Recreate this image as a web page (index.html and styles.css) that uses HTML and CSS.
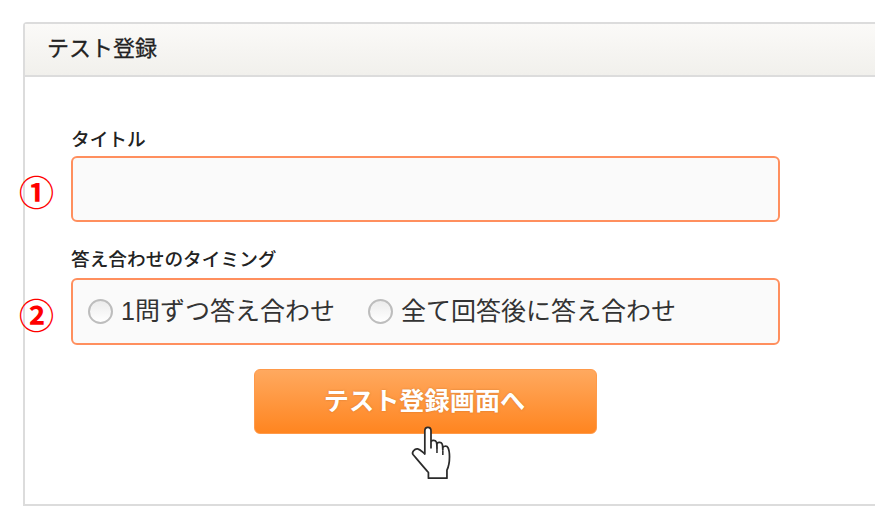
FILE: index.html
```html
<!DOCTYPE html>
<html lang="ja">
<head>
    <meta charset="UTF-8">
    <meta name="viewport" content="width=device-width, initial-scale=1.0">
    <title>テスト登録</title>
    <link rel="stylesheet" href="styles.css">
</head>
<body>
    <div class="panel">
        <div class="panel-header">テスト登録</div>
        <form class="panel-body" action="">
            <div class="field">
                <label class="field-label" for="title">タイトル</label>
                <div class="field-row">
                    <span class="step">①</span>
                    <input type="text" id="title" class="title-input">
                </div>
            </div>
            <div class="field timing">
                <div class="field-label">答え合わせのタイミング</div>
                <div class="field-row radio-box">
                    <span class="step">②</span>
                    <label class="radio"><span class="radio-mark"></span><span class="radio-text">1問ずつ答え合わせ</span></label>
                    <label class="radio"><span class="radio-mark"></span><span class="radio-text">全て回答後に答え合わせ</span></label>
                </div>
            </div>
            <div class="btn-wrap">
                <button type="button" class="btn">テスト登録画面へ
                    <svg class="hand" viewBox="0 0 70 65" width="72" height="67">
                        <path d="M29 33V10.5C29 8 30.5 7 32 7s3 1 3 3.500V27V21.500c0-2 4-2.500 5-.5 .6 1 .8 3 .8 6v-3.500c0-2 4-2.500 5-.3 .5 1 .7 3 .7 6v-2c0-2 4-2.500 5-.5 1 2 1.500 5 1.500 9 0 7-1 10-2.500 13v7.800H32.500v-5.500C28 46 23 40 17.500 33.500c-1.500-2 1.500-6 4.500-5.500 2.500.5 4.500 3 7 5z" fill="#fff" stroke="#2b2b2b" stroke-width="1.700" stroke-linejoin="round"/>
                        <path d="M40.800 27v5M46.500 30v4" fill="none" stroke="#2b2b2b" stroke-width="1.500"/>
                    </svg>
                </button>
            </div>
        </form>
    </div>
</body>
</html>
```

FILE: styles.css
```css
html, body {
    margin: 0;
    height: 523px;
    overflow: hidden;
    background: #fff;
}

body {
    padding: 22px 0 0 22.500px;
    box-sizing: border-box;
    font-family: "Liberation Sans", "Noto Sans CJK JP", sans-serif;
    color: #222;
}

.panel {
    width: 852.500px;
    height: 484px;
    box-sizing: border-box;
    border: 2px solid #dcdcdc;
    border-right: 0;
    border-radius: 4px 0 0 0;
}

.panel-header {
    height: 53px;
    box-sizing: border-box;
    padding-left: 22.500px;
    border-bottom: 2px solid #dcdcdc;
    background: linear-gradient(#fbfaf8, #f1f0ec);
    font-size: 22px;
    line-height: 50px;
    -webkit-text-stroke: 0.3px #222;
}

.panel-body {
    padding: 47px 0 0 46.500px;
    width: 709px;
}

.field-label {
    display: block;
    height: 32px;
    font-size: 18.700px;
    line-height: 32px;
    font-weight: 500;
}

.timing .field-label {
    line-height: 28px;
}

.field-row {
    position: relative;
    box-sizing: border-box;
    border: 2px solid #ff8f5e;
    border-radius: 6px;
    background: #fafafa;
}

.title-input {
    display: block;
    width: 100%;
    height: 62px;
    box-sizing: border-box;
    padding: 0 12px;
    border: 0;
    background: transparent;
}

.timing {
    margin-top: 24px;
}

.radio-box {
    display: flex;
    gap: 33px;
    height: 67px;
    padding-left: 15px;
    align-items: center;
}

.step {
    position: absolute;
    left: -54px;
    top: calc(50% + 5px);
    transform: translateY(-50%);
    color: #f00;
    font-size: 35px;
    line-height: 40px;
    font-weight: bold;
}

.radio {
    display: flex;
    align-items: center;
    gap: 8px;
    font-size: 25px;
    color: #333;
}

.radio-text {
    padding-bottom: 6px;
}

.radio-mark {
    width: 25px;
    height: 25px;
    box-sizing: border-box;
    border: 2px solid #bdbdbd;
    border-radius: 50%;
    background: linear-gradient(#ececec, #fff);
}

.btn-wrap {
    display: flex;
    justify-content: center;
    margin-top: 24px;
}

.btn {
    position: relative;
    width: 343px;
    height: 65px;
    padding: 0 2px 6px 0;
    border: 1px solid #ff9a4a;
    border-radius: 6px;
    background: linear-gradient(#ffa95f, #ff8520);
    color: #fff;
    font-family: inherit;
    font-size: 25.200px;
    font-weight: bold;
    text-shadow: 0 0 2px rgba(160, 90, 30, 0.5);
}

.hand {
    position: absolute;
    left: 140px;
    top: 50px;
}
```
